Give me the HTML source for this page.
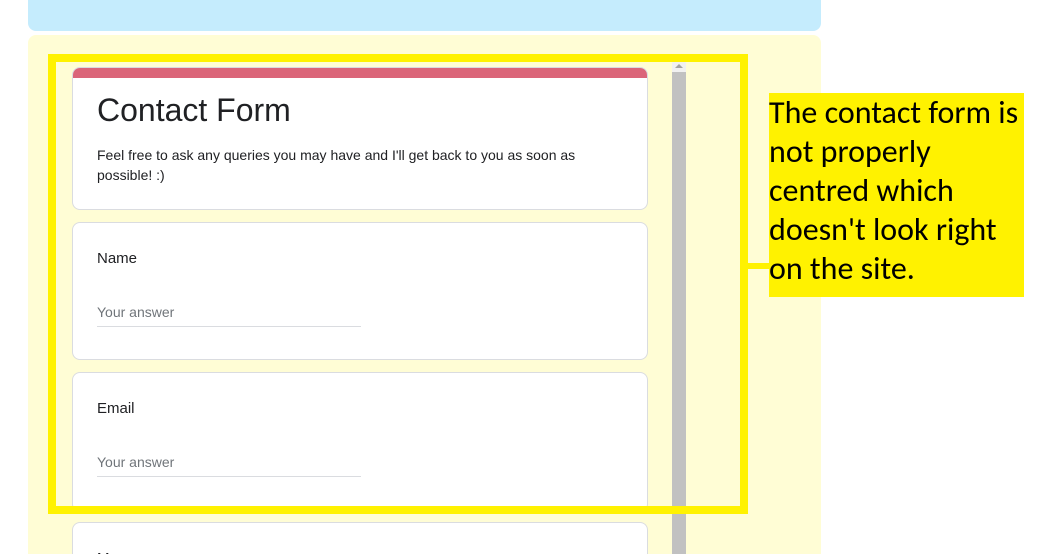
<!DOCTYPE html>
<html style="width:1058px;height:554px;overflow:hidden"><head><style>
*{margin:0;padding:0;box-sizing:border-box}
body{width:1058px;height:554px;overflow:hidden;background:#fff;position:relative;font-family:"Liberation Sans",sans-serif}
.a{position:absolute}
.card{position:absolute;left:72px;width:576px;background:#fff;border:1px solid #dadce0;border-radius:8px}
.lbl{position:absolute;left:24px;font-size:15px;color:#202124}
.ans{position:absolute;left:24px;font-size:14px;color:#70757a}
.ul{position:absolute;left:24px;width:264px;height:1px;background:#dadce0}
</style></head><body>
<div class="a" style="left:28px;top:0;width:793px;height:31px;background:#c5ecfd;border-radius:0 0 8px 8px"></div>
<div class="a" style="left:28px;top:35px;width:793px;height:519px;background:#fffdd5;border-radius:8px 8px 0 0"></div>

<div class="card" style="top:67px;height:143px;overflow:hidden">
 <div class="a" style="left:0;top:0;width:576px;height:10px;background:#db6579"></div>
 <div class="a" style="left:24px;top:24px;font-size:32px;color:#202124">Contact Form</div>
 <div class="a" style="left:24px;top:77px;width:510px;font-size:14px;line-height:20px;color:#202124">Feel free to ask any queries you may have and I'll get back to you as soon as possible! :)</div>
</div>
<div class="card" style="top:222px;height:138px">
 <div class="lbl" style="top:27px">Name</div>
 <div class="ans" style="top:81px">Your answer</div>
 <div class="ul" style="top:103px"></div>
</div>
<div class="card" style="top:372px;height:140px">
 <div class="lbl" style="top:27px">Email</div>
 <div class="ans" style="top:81px">Your answer</div>
 <div class="ul" style="top:103px"></div>
</div>
<div class="card" style="top:522px;height:32px;border-bottom:none;border-radius:8px 8px 0 0;overflow:hidden">
 <div class="lbl" style="top:27px">Message</div>
</div>

<div class="a" style="left:672px;top:62px;width:14px;height:492px;background:#c1c1c1"></div>
<div class="a" style="left:672px;top:62px;width:14px;height:10px;background:#f1f1f1"></div>
<div class="a" style="left:675px;top:64px;width:0;height:0;border-left:4px solid transparent;border-right:4px solid transparent;border-bottom:4px solid #a3a3a3"></div>

<div class="a" style="left:48px;top:54px;width:700px;height:460px;border:8px solid #fff200"></div>
<div class="a" style="left:748px;top:263px;width:22px;height:6px;background:#fff200"></div>
<div class="a" style="left:769px;top:93px;width:255px;height:204px;background:#fff200;padding:0 0 0 0;font-family:Carlito,'Liberation Sans',sans-serif;font-size:32px;line-height:39px;color:#000;white-space:nowrap;overflow:hidden">The contact form is<br>not properly<br>centred which<br>doesn't look right<br>on the site.</div>
</body></html>
